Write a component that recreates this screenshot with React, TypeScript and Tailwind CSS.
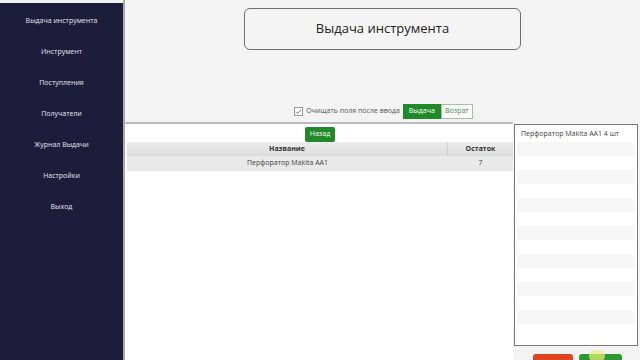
import { Check } from "lucide-react";

const menu = ["Выдача инструмента", "Инструмент", "Поступления", "Получатели", "Журнал Выдачи", "Настройки", "Выход"];

const App = () => {
  return (
    <div className="flex h-[360px] w-[640px] overflow-hidden bg-[#f3f3f3] font-['Open_Sans',sans-serif] text-[#222]">
      <aside className="mt-[3px] flex w-[123px] shrink-0 flex-col items-center bg-[#1e1c3b] pt-[13px] text-[7px] text-[#e4e4ee]">
        {menu.map((item) => (
          <div key={item} className="flex h-[31px] items-start justify-center leading-[10px]">
            {item}
          </div>
        ))}
      </aside>
      <div className="w-[2px] shrink-0 bg-[#a9a9b0]" />

      <main className="flex flex-1 flex-col">
        <div className="flex justify-center pt-[8px]">
          <div className="flex h-[42px] w-[277px] items-center justify-center rounded-[6px] border border-[#6f6f6f] bg-[#f4f4f4] text-[13px]">
            Выдача инструмента
          </div>
        </div>

        <div className="mt-[54px] flex h-[15px] items-center justify-center pl-[2px]">
          <div className="flex h-[9px] w-[9px] items-center justify-center border border-[#9a9a9a] bg-white">
            <Check className="h-[8px] w-[8px] text-[#444]" strokeWidth={2.5} />
          </div>
          <span className="ml-[3px] text-[7px] text-[#555]">Очищать поля после ввода</span>
          <div className="ml-[3px] flex h-[15px] w-[38px] items-center justify-center bg-[#1f8a27] text-[7px] text-white">Выдача</div>
          <div className="flex h-[15px] w-[32px] items-center justify-center border border-[#9bc59f] bg-white text-[7px] text-[#3b8a41]">Возрат</div>
        </div>

        <div className="mt-[3px] flex flex-1">
          <section className="flex w-[388px] flex-col border-t-2 border-[#bdbdbd] bg-white pl-[2px]">
            <div className="flex h-[18px] items-center justify-center pt-[2px]">
              <div className="flex h-[15px] w-[30px] items-center justify-center rounded-[2px] bg-[#1f8a27] text-[7px] text-white">Назад</div>
            </div>
            <div className="flex h-[14px] bg-gradient-to-b from-[#ececec] to-[#dcdcdc] text-[7px] font-bold text-[#333]">
              <div className="flex flex-1 items-center justify-center border-r border-[#cfcfcf]">Название</div>
              <div className="flex w-[65px] items-center justify-center">Остаток</div>
            </div>
            <div className="flex h-[15px] bg-[#e9e9e9] text-[7px] text-[#444]">
              <div className="flex flex-1 items-center justify-center">Перфоратор Makita AA1</div>
              <div className="flex w-[65px] items-center justify-center">7</div>
            </div>
          </section>

          <div className="flex flex-1 flex-col pl-[1px] pr-[2px] pt-[2px]">
            <div className="flex h-[222px] flex-col border border-[#7a7a7a] bg-white p-[2px]">
              <div className="flex h-[15px] items-center px-[4px] text-[7px] text-[#444]">Перфоратор Makita AA1 4 шт</div>
              {Array.from({ length: 14 }).map((_, i) => (
                <div key={i} className={i % 2 === 0 ? "h-[14px] bg-[#f6f6f6]" : "h-[14px] bg-white"} />
              ))}
            </div>
            <div className="mt-[8px] flex gap-[6px] pl-[19px]">
              <div className="h-[12px] w-[40px] rounded-t-[3px] bg-[#e0441f]" />
              <div className="relative h-[12px] w-[43px] rounded-t-[3px] bg-[#2c9a2e]">
                <div className="absolute left-[10px] top-[-4px] h-[12px] w-[16px] rounded-full bg-[#e7f07a]/70" />
              </div>
            </div>
          </div>
        </div>
      </main>
    </div>
  );
};

export default App;
